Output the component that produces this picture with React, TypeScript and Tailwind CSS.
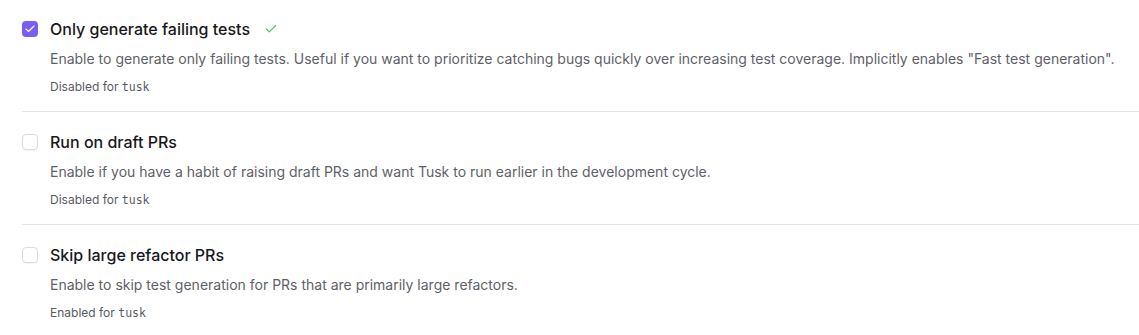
import { Check } from "lucide-react";

type Setting = {
  id: string;
  title: string;
  description: string;
  status: "Enabled" | "Disabled";
  checked: boolean;
  saved?: boolean;
};

const settings: Setting[] = [
  {
    id: "failing",
    title: "Only generate failing tests",
    description:
      'Enable to generate only failing tests. Useful if you want to prioritize catching bugs quickly over increasing test coverage. Implicitly enables "Fast test generation".',
    status: "Disabled",
    checked: true,
    saved: true,
  },
  {
    id: "draft",
    title: "Run on draft PRs",
    description: "Enable if you have a habit of raising draft PRs and want Tusk to run earlier in the development cycle.",
    status: "Disabled",
    checked: false,
  },
  {
    id: "refactor",
    title: "Skip large refactor PRs",
    description: "Enable to skip test generation for PRs that are primarily large refactors.",
    status: "Enabled",
    checked: false,
  },
];

export default function App() {
  return (
    <div className="min-h-[335px] w-[1139px] bg-white pl-[22px] font-['Inter',sans-serif]">
      {settings.map((item, index) => (
        <div
          key={item.id}
          className={`flex gap-3 pb-4 ${index === 0 ? "pt-[17px]" : "border-t border-[#e4e4e7] pt-[18px]"}`}
        >
          <div className="flex h-6 items-center">
            {item.checked ? (
              <span className="flex h-4 w-4 items-center justify-center rounded-[4px] bg-[#7b5cf5]">
                <Check className="h-3 w-3 text-white" strokeWidth={2.25} />
              </span>
            ) : (
              <span className="h-4 w-4 rounded-[4px] border border-[#dcdce0] bg-white shadow-[0_1px_1px_rgba(0,0,0,0.04)]" />
            )}
          </div>
          <div className="flex flex-col">
            <div className="flex h-6 items-center gap-[14px]">
              <span className="text-base font-medium text-[#18181b]">{item.title}</span>
              {item.saved ? <Check className="h-[14px] w-[14px] text-[#4cc46a]" strokeWidth={2} /> : null}
            </div>
            <p className="mt-2 text-sm leading-5 text-[#5f5f69]">{item.description}</p>
            <p className="mt-[10px] text-xs leading-4 text-[#5a5a63]">
              {item.status} for <span className="font-['DejaVu_Sans_Mono',monospace] text-[11.5px]">tusk</span>
            </p>
          </div>
        </div>
      ))}
    </div>
  );
}
